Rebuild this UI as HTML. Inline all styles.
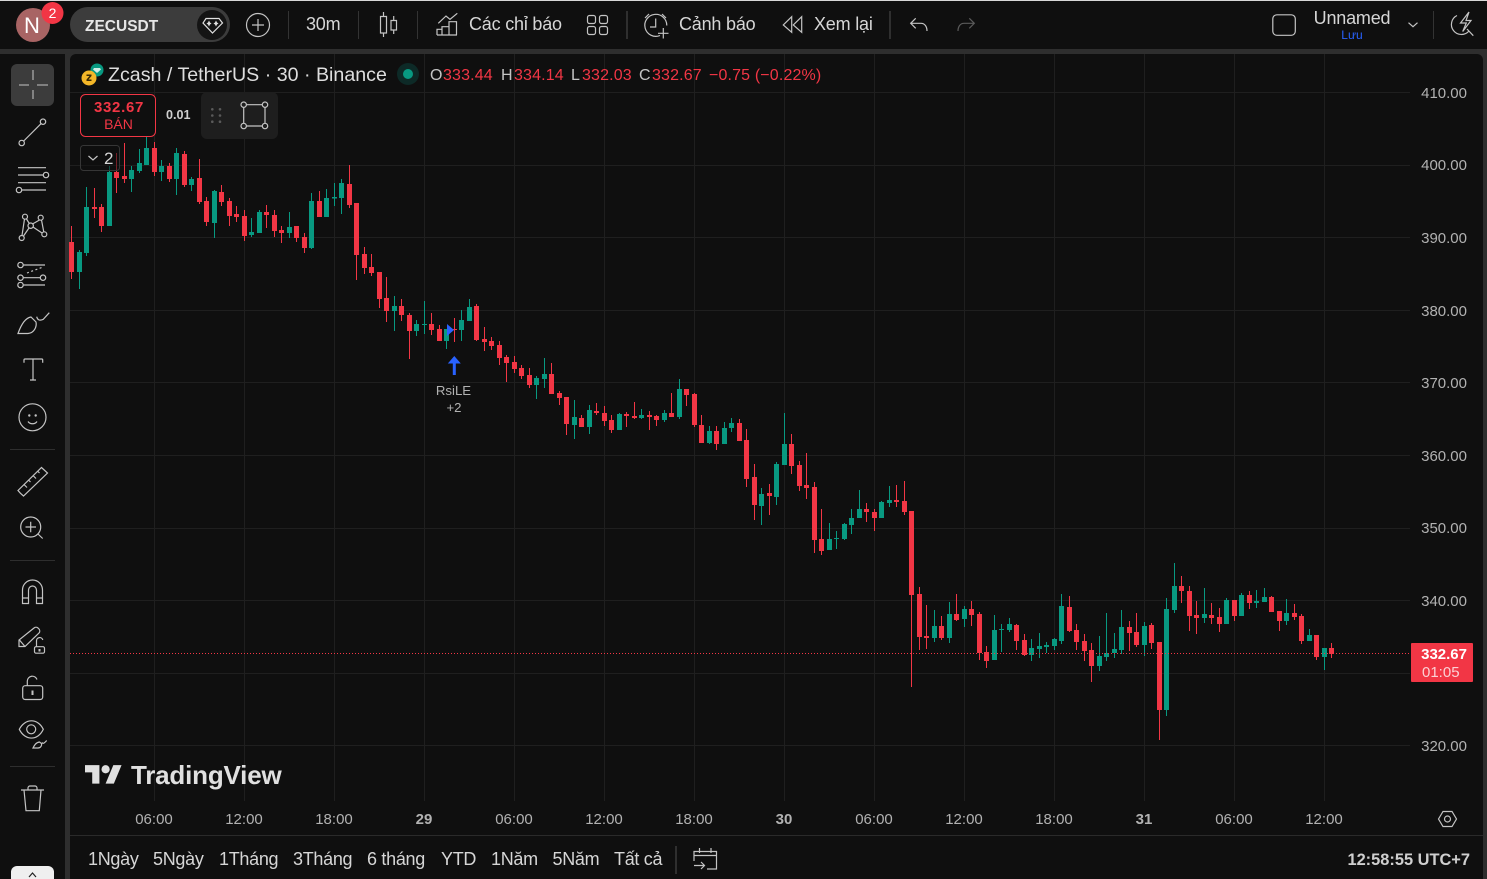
<!DOCTYPE html>
<html><head><meta charset="utf-8"><title>ZECUSDT</title>
<style>
html,body{margin:0;padding:0;background:#2e2e2e;width:1487px;height:879px;overflow:hidden}
svg{display:block;position:absolute;left:0;top:0}
text{font-family:"Liberation Sans","Noto Sans CJK JP",sans-serif;fill:#d6d6d6}
.t{font-size:18px;letter-spacing:-.2px}.b{font-size:18px;letter-spacing:-.3px}.p{font-size:15px;fill:#b2b2b2;text-anchor:end}
.x{font-size:15px;fill:#b2b2b2;text-anchor:middle}
.r{fill:#f23645}.o{font-size:16px;letter-spacing:.15px}
.i{fill:none;stroke:#c4c4c4;stroke-width:1.2}
</style></head><body>
<svg width="1487" height="879" viewBox="0 0 1487 879" xmlns="http://www.w3.org/2000/svg">
<rect width="1487" height="879" fill="#2e2e2e"/>
<rect width="1487" height="49" fill="#0f0f0f"/>
<rect width="1487" height="1" fill="#d8d8d8"/>
<path d="M0 54H65V879H0Z" fill="#0f0f0f"/>
<path d="M70 60a6 6 0 0 1 6-6H1477a6 6 0 0 1 6 6V879H70Z" fill="#0f0f0f"/>
<!-- grid -->
<path shape-rendering="crispEdges" stroke="#1f1f1f" stroke-width="1" fill="none" d="M70 92.5H1410M70 165.5H1410M70 237.5H1410M70 310.5H1410M70 382.5H1410M70 455.5H1410M70 528.5H1410M70 600.5H1410M70 673.5H1410M70 745.5H1410M154.5 54V801M244.5 54V801M334.5 54V801M424.5 54V801M514.5 54V801M604.5 54V801M694.5 54V801M784.5 54V801M874.5 54V801M964.5 54V801M1054.5 54V801M1144.5 54V801M1234.5 54V801M1324.5 54V801"/>
<path shape-rendering="crispEdges" stroke="#2a2a2a" d="M70 835.5H1483"/>
<!-- red wicks -->
<path shape-rendering="crispEdges" stroke="#f23645" stroke-width="1" fill="none" d="M71.5 226V279M94.5 188V218M101.5 204V232M116.5 153V193M124.5 143V183M154.5 142V176M169.5 163V182M184.5 151V187M199.5 159V204M206.5 197V226M221.5 185V206M229.5 198V226M236.5 206V222M244.5 210V241M266.5 205V228M274.5 210V237M281.5 226V243M296.5 226V242M304.5 233V253M319.5 191V217M349.5 165V208M356.5 203V280M364.5 247V274M371.5 254V276M379.5 272V308M386.5 277V322M401.5 299V321M409.5 313V359M431.5 313V335M439.5 325V341M454.5 318V342M476.5 304V341M484.5 327V351M491.5 337V350M499.5 341V365M506.5 355V382M514.5 356V373M521.5 365V379M529.5 368V388M551.5 363V394M559.5 391V405M566.5 397V435M581.5 415V427M596.5 403V415M604.5 406V426M611.5 415V433M626.5 412V427M634.5 402V419M649.5 411V430M656.5 415V426M671.5 393V417M686.5 389V406M694.5 393V427M701.5 415V443M716.5 426V450M739.5 419V441M746.5 429V487M754.5 464V520M769.5 484V515M791.5 434V474M799.5 461V491M806.5 453V499M814.5 482V553M821.5 509V555M866.5 503V522M874.5 509V531M896.5 485V507M904.5 481V515M911.5 511V687M919.5 587V650M926.5 605V649M941.5 616V640M956.5 594V621M971.5 601V626M979.5 612V660M986.5 646V668M1016.5 624V650M1024.5 634V656M1069.5 596V632M1076.5 624V650M1084.5 634V661M1091.5 643V682M1129.5 621V651M1136.5 613V647M1151.5 623V649M1159.5 642V740M1181.5 576V603M1189.5 586V631M1196.5 601V634M1211.5 603V624M1219.5 608V632M1234.5 600V621M1249.5 591V609M1271.5 596V612M1279.5 611V631M1294.5 604V620M1301.5 614V644M1316.5 635V660M1331.5 643V658"/>
<!-- red bodies -->
<path shape-rendering="crispEdges" stroke="#f23645" stroke-width="5" fill="none" d="M71.5 242V272M94.5 207V209M101.5 207V226M116.5 172V178M124.5 176V179M154.5 148V172M169.5 166V179M184.5 154V185M199.5 178V202M206.5 201V222M221.5 192V202M229.5 201V216M236.5 214V217M244.5 216V236M266.5 212V215M274.5 215V231M281.5 230V233M296.5 226V238M304.5 237V248M319.5 201V217M349.5 184V205M356.5 203V255M364.5 254V268M371.5 267V273M379.5 272V299M386.5 298V311M401.5 306V315M409.5 315V331M431.5 324V330M439.5 329V341M454.5 329V330M476.5 306V340M484.5 339V342M491.5 341V346M499.5 345V358M506.5 357V363M514.5 362V369M521.5 368V376M529.5 375V385M551.5 374V394M559.5 393V398M566.5 397V424M581.5 418V427M596.5 411V413M604.5 413V421M611.5 420V430M626.5 414V416M634.5 416V418M649.5 415V417M656.5 416V420M671.5 413V417M686.5 389V395M694.5 394V425M701.5 425V443M716.5 431V444M739.5 423V441M746.5 440V479M754.5 477V505M769.5 493V496M791.5 444V466M799.5 465V486M806.5 485V488M814.5 487V540M821.5 539V551M866.5 509V512M874.5 512V518M896.5 500V502M904.5 501V512M911.5 511V595M919.5 594V637M926.5 636V638M941.5 626V638M956.5 614V620M971.5 609V615M979.5 614V653M986.5 652V661M1016.5 625V641M1024.5 640V655M1069.5 607V631M1076.5 630V642M1084.5 641V651M1091.5 650V666M1129.5 627V633M1136.5 632V645M1151.5 625V643M1159.5 642V710M1181.5 586V591M1189.5 591V616M1196.5 615V618M1211.5 615V618M1219.5 617V624M1234.5 600V616M1249.5 595V603M1271.5 597V612M1279.5 611V621M1294.5 613V617M1301.5 616V641M1316.5 635V657M1331.5 648V654"/>
<!-- green wicks -->
<path shape-rendering="crispEdges" stroke="#089981" stroke-width="1" fill="none" d="M79.5 250V289M86.5 187V256M109.5 166V226M131.5 166V192M139.5 149V173M146.5 137V165M161.5 160V181M176.5 148V195M191.5 177V191M214.5 190V238M251.5 218V237M259.5 210V233M289.5 212V238M311.5 193V249M326.5 189V217M334.5 183V206M341.5 179V214M394.5 296V331M416.5 320V336M424.5 301V334M446.5 329V349M461.5 310V341M469.5 299V321M536.5 376V399M544.5 358V388M574.5 400V439M589.5 405V434M619.5 413V430M641.5 409V419M664.5 410V422M679.5 379V419M709.5 426V444M724.5 422V444M731.5 418V432M761.5 488V525M776.5 462V505M784.5 413V465M829.5 523V550M836.5 531V549M844.5 523V540M851.5 509V534M859.5 490V518M881.5 501V518M889.5 486V507M934.5 610V642M949.5 602V643M964.5 606V627M994.5 615V660M1001.5 624V652M1009.5 618V632M1031.5 639V661M1039.5 633V658M1046.5 642V653M1054.5 638V650M1061.5 594V644M1099.5 636V671M1106.5 613V661M1114.5 633V658M1121.5 610V654M1144.5 622V656M1166.5 598V716M1174.5 563V613M1204.5 588V623M1226.5 598V624M1241.5 593V616M1256.5 590V608M1264.5 588V602M1286.5 599V625M1309.5 629V641M1324.5 648V670"/>
<!-- green bodies -->
<path shape-rendering="crispEdges" stroke="#089981" stroke-width="5" fill="none" d="M79.5 252V272M86.5 207V253M109.5 172V226M131.5 170V179M139.5 163V171M146.5 148V165M161.5 166V172M176.5 153V179M191.5 179V185M214.5 191V223M251.5 232V235M259.5 212V233M289.5 227V233M311.5 201V248M326.5 198V217M334.5 197V198.500M341.5 183V198M394.5 306V311M416.5 324V331M424.5 324V325M446.5 329V341M461.5 320V330M469.5 307V321M536.5 378V385M544.5 374V379M574.5 417V425M589.5 410V427M619.5 414V430M641.5 415V418M664.5 413V420M679.5 389V417M709.5 431V443M724.5 428V444M731.5 423V428M761.5 494V506M776.5 464V497M784.5 444V465M829.5 539V550M836.5 538V539M844.5 524V539M851.5 518V525M859.5 509V518M881.5 502V518M889.5 500V503M934.5 626V638M949.5 614V638M964.5 609V619M994.5 630V660M1001.5 629V630M1009.5 624V630M1031.5 648V655M1039.5 646V649M1046.5 645V647M1054.5 639V646M1061.5 606V641M1099.5 656V666M1106.5 653V657M1114.5 649V653M1121.5 627V650M1144.5 626V645M1166.5 609V710M1174.5 586V610M1204.5 614V618M1226.5 600V624M1241.5 595V616M1256.5 601V603M1264.5 597V602M1286.5 613V621M1309.5 635V641M1324.5 648V657"/>
<!-- last price dotted -->
<path stroke="#f23645" stroke-width="1" stroke-dasharray="1 2" d="M70 653.500H1410"/>
<rect x="1411" y="643" width="62" height="39" rx="1" fill="#f23645"/>
<text x="1467" y="659" font-size="15" font-weight="bold" text-anchor="end" style="fill:#fff">332.67</text>
<text x="1422" y="677" font-size="15" style="fill:#fbd0d4">01:05</text>

<!-- price axis -->
<text class="p" x="1467" y="98">410.00</text><text class="p" x="1467" y="170">400.00</text><text class="p" x="1467" y="243">390.00</text><text class="p" x="1467" y="316">380.00</text><text class="p" x="1467" y="388">370.00</text><text class="p" x="1467" y="461">360.00</text><text class="p" x="1467" y="533">350.00</text><text class="p" x="1467" y="606">340.00</text><text class="p" x="1467" y="751">320.00</text>
<!-- time axis -->
<text class="x" x="154" y="824">06:00</text><text class="x" x="244" y="824">12:00</text><text class="x" x="334" y="824">18:00</text><text class="x" x="424" y="824" font-weight="bold">29</text><text class="x" x="514" y="824">06:00</text><text class="x" x="604" y="824">12:00</text><text class="x" x="694" y="824">18:00</text><text class="x" x="784" y="824" font-weight="bold">30</text><text class="x" x="874" y="824">06:00</text><text class="x" x="964" y="824">12:00</text><text class="x" x="1054" y="824">18:00</text><text class="x" x="1144" y="824" font-weight="bold">31</text><text class="x" x="1234" y="824">06:00</text><text class="x" x="1324" y="824">12:00</text>
<polygon points="1438.5,819 1443,811.500 1452,811.500 1456.500,819 1452,826.500 1443,826.500" class="i"/><circle cx="1447.500" cy="819" r="3" class="i"/>

<!-- bottom bar -->
<text class="b" x="88" y="865">1Ngày</text><text class="b" x="153" y="865">5Ngày</text><text class="b" x="219" y="865">1Tháng</text><text class="b" x="293" y="865">3Tháng</text><text class="b" x="367" y="865">6 tháng</text><text class="b" x="441" y="865">YTD</text><text class="b" x="491" y="865">1Năm</text><text class="b" x="552.500" y="865">5Năm</text><text class="b" x="614" y="865">Tất cả</text>
<path stroke="#3a3a3a" stroke-width="1.500" d="M676 846V874"/>
<path class="i" d="M694 861V851.500H716.500V869H707M694 855.500H716.500M699.500 848V853M711 848V853M694 865.500H704M701 862l3.500 3.500-3.500 3.500"/>
<text x="1470" y="865" font-size="16.400" font-weight="bold" text-anchor="end" style="fill:#cfcfcf">12:58:55 UTC+7</text>

<!-- legend -->
<circle cx="97" cy="70" r="6.500" fill="#089981"/><path d="M94 68h6l1 1.500-4 3.500-4-3.500z" fill="#cfeee6"/>
<circle cx="89" cy="78" r="7.500" fill="#f4b728"/><path d="M86.500 74.500h5v1.500l-3 3.500h3v1.500h-5v-1.500l3-3.500h-3z" fill="#3a2a05"/>
<text x="108" y="81" font-size="19.640" style="fill:#dedede">Zcash / TetherUS · 30 · Binance</text>
<circle cx="408" cy="74" r="11" fill="#0d2a27"/><circle cx="408" cy="74" r="5" fill="#089981"/>
<text class="o" x="430" y="80" style="fill:#c4c4c4">O</text><text class="o r" x="443" y="80">333.44</text>
<text class="o" x="501" y="80" style="fill:#c4c4c4">H</text><text class="o r" x="514" y="80">334.14</text>
<text class="o" x="571" y="80" style="fill:#c4c4c4">L</text><text class="o r" x="582" y="80">332.03</text>
<text class="o" x="639" y="80" style="fill:#c4c4c4">C</text><text class="o r" x="652" y="80">332.67</text>
<text class="o r" x="709" y="80">−0.75 (−0.22%)</text>

<!-- trading widgets -->
<rect x="80.500" y="94.500" width="75" height="42" rx="5" fill="#0f0f0f" stroke="#f23645"/>
<text x="119" y="112" font-size="15" font-weight="bold" text-anchor="middle" letter-spacing=".7" class="r">332.67</text>
<text x="118.500" y="129" font-size="14" text-anchor="middle" class="r">BÁN</text>
<text x="166" y="119" font-size="12.600" font-weight="bold" style="fill:#cfcfcf">0.01</text>
<rect x="201" y="92" width="77" height="47" rx="6" fill="#1e1e1e"/>
<g fill="#5a5a5a"><circle cx="212.300" cy="109.300" r="1.300"/><circle cx="220" cy="109.300" r="1.300"/><circle cx="212.300" cy="115.500" r="1.300"/><circle cx="220" cy="115.500" r="1.300"/><circle cx="212.300" cy="121.700" r="1.300"/><circle cx="220" cy="121.700" r="1.300"/></g>
<path class="i" d="M246.500 104.700H262.300M246.500 126H262.300M243.700 107.500V123.200M265 107.500V123.200"/>
<g class="i"><circle cx="243.700" cy="104.700" r="2.700"/><circle cx="265" cy="104.700" r="2.700"/><circle cx="243.700" cy="126" r="2.700"/><circle cx="265" cy="126" r="2.700"/></g>
<rect x="80.500" y="145.500" width="39" height="25" rx="3" fill="#0f0f0f" fill-opacity=".55" stroke="#363636"/>
<path class="i" d="M88.500 156l4.500 4 4.500-4"/>
<text x="104" y="164" font-size="17" style="fill:#d6d6d6">2</text>

<!-- RsiLE marker -->
<polygon points="447,324 454,330 447,336" fill="#2962ff"/>
<path d="M454.300 356l6.500 7.500h-5V375h-3V363.500h-5z" fill="#2962ff"/>
<text x="453.500" y="395" font-size="13.200" text-anchor="middle" style="fill:#b2b2b2">RsiLE</text>
<text x="454" y="412" font-size="13.200" text-anchor="middle" style="fill:#b2b2b2">+2</text>

<!-- TV logo -->
<g transform="translate(85,761) scale(1.030)" fill="#e0e0e0"><path d="M14 22H7V11H0V4h14v18zM28 22h-8l7.500-18h8L28 22z"/><circle cx="20" cy="8" r="4"/></g>
<text x="131" y="784" font-size="26" font-weight="bold" letter-spacing="-.2" style="fill:#e0e0e0">TradingView</text>

<!-- top bar -->
<circle cx="33" cy="25" r="17" fill="#a86464"/>
<text x="32" y="33" font-size="22" text-anchor="middle" style="fill:#fff">N</text>
<circle cx="52.500" cy="13" r="11" fill="#f23645"/>
<text x="52.500" y="18" font-size="14" text-anchor="middle" style="fill:#fff">2</text>
<rect x="70" y="7" width="160" height="35" rx="17.500" fill="#3c3c3c"/>
<circle cx="212" cy="25" r="15" fill="#141414"/>
<text x="85" y="31" font-size="15.500" font-weight="bold" style="fill:#e6e6e6">ZECUSDT</text>
<path class="i" style="stroke:#e0e0e0" d="M206 18.500H219L222.500 23L212.500 33L203 23Z"/>
<path d="M209 20.500l1 2 1.500 1-1.500 1-1 2-1-2-1.500-1 1.500-1zM216 20.500l1 2 1.500 1-1.500 1-1 2-1-2-1.500-1 1.500-1z" fill="#e0e0e0"/>
<circle cx="258" cy="25" r="11.500" class="i"/><path class="i" d="M252 25H264M258 19V31"/>
<path stroke="#333" stroke-width="1" d="M288.500 11V39M358.500 11V39M417.500 11V39M1433.500 11V39"/>
<path stroke="#3a3a3a" stroke-width="1.500" d="M627 11V39M890 11V39"/>
<text class="t" x="306" y="30">30m</text>
<path class="i" d="M380.500 16.500H386.500V33H380.500ZM383.500 12V16.500M383.500 33V37M391 20.500H396.500V30H391ZM393.700 16V20.500M393.700 30V34"/>
<path class="i" d="M437 35H457M437 35V29.300H442V35M442 35V26.700H449V35M449 35V21.700H456.500V35M438.300 23.300L446 16L450 19.300L457.300 13.300"/>
<text class="t" x="469" y="30">Các chỉ báo</text>
<g class="i"><rect x="587.500" y="15.500" width="8" height="8" rx="2"/><rect x="599.500" y="15.500" width="8" height="8" rx="2"/><rect x="587.500" y="26.500" width="8" height="8" rx="2"/><rect x="599.500" y="26.500" width="8" height="8" rx="2"/></g>
<path class="i" d="M660 35.500A11 11 0 1 1 666.800 25.500M655.700 18.500V27H650M645 18l4-4M666 18l-4-4M663.300 28V38.500M658 33.300H668.500"/>
<text class="t" x="679" y="30">Cảnh báo</text>
<path class="i" d="M791.700 16.700L783.300 25L791.700 32.300ZM801.700 16.700L793.300 25L801.700 32.300Z"/>
<text class="t" x="814" y="30">Xem lại</text>
<path class="i" d="M915.700 18.300L910.700 23.300L915.700 28.300M910.700 23.300H921C925 23.300 927 27 927 31"/>
<path class="i" style="stroke:#5a5a5a" d="M969.300 18.300L974.300 23.300L969.300 28.300M974.300 23.300H964C960 23.300 958 27 958 31"/>
<rect x="1272.800" y="14.800" width="22.500" height="20.500" rx="4" class="i"/>
<text x="1352" y="24" font-size="18" letter-spacing="-.2" text-anchor="middle" style="fill:#d6d6d6">Unnamed</text>
<text x="1352" y="39" font-size="12" text-anchor="middle" style="fill:#2962ff">Lưu</text>
<path class="i" d="M1408.500 22.700L1413 26.700L1417.500 22.700"/>
<path class="i" d="M1457 15.500A10 10 0 1 0 1469 31M1469 12L1460.500 23H1466.300L1462.700 31.500L1471 20.500H1466ZM1467 29L1473.300 35.700"/>

<!-- left toolbar -->
<rect x="11" y="64" width="43" height="42" rx="6" fill="#3c3c3c"/>
<path stroke="#a8a8a8" stroke-width="1.300" d="M19 85H29M37 85H48M33 70V80M33 90V99"/>
<g class="i">
<path d="M23.700 141L41 123.700"/><circle cx="43" cy="121.700" r="2.700"/><circle cx="21.700" cy="143" r="2.700"/>
<path d="M18 167.700H46M18 175H43.300M18 182.700H46M22 190H46"/><circle cx="46" cy="175" r="2.700"/><circle cx="19" cy="190" r="2.700"/>
<circle cx="25" cy="216.700" r="2.500"/><circle cx="40.700" cy="217.700" r="2.500"/><circle cx="30.700" cy="225.700" r="2.700"/><circle cx="44.300" cy="234.300" r="2.500"/><circle cx="21.700" cy="238" r="2.500"/>
<path d="M24.500 219L22 235.500M26.500 219L29.300 223.500M39.500 220L32.500 224M41.500 220L43.800 232M33 227L42 233M29 228L23.500 236"/>
<circle cx="20.500" cy="265" r="2.700"/><circle cx="20.500" cy="277.700" r="2.700"/><circle cx="43" cy="277.700" r="2.700"/><circle cx="20.500" cy="285" r="2.700"/>
<path d="M23.200 265H45M23.200 277.700H40.300M23.200 285H45"/><path stroke-dasharray="2 2.500" d="M27 273L43 267"/>
<path d="M18 333.500H28C34 333 37 327 36 322L31 317C25 318 21 325 18 333.500ZM36.700 316.700C37.500 320 39.500 321 43.300 319.300L49.300 312.700"/>
<path d="M24 362.700V360C24 359.300 24.500 359 25 359H41.700C42.300 359 42.700 359.300 42.700 360V362.700M33 359V380M30 380H36"/>
<circle cx="32.500" cy="417.300" r="13.500"/><path d="M28 421.500C30 424.500 35 424.500 37 421.500"/>
<path d="M20.500 493.300L18 490.500L41.500 467.500L47.500 473L23.500 496ZM24 484.500L27 487.500M28.500 480L30.500 482M33 475.500L36 478.500M37.500 471L39.500 473"/>
<circle cx="30.700" cy="527" r="10"/><path d="M38 534L42.700 538.500M25.500 527H36M30.700 521.700V532.300"/>
<path d="M22.500 603.500V590a10 10 0 0 1 20 0V603.500H36.500V590a4 4 0 0 0-8 0V603.500ZM22.500 598H28.500M36.500 598H42.500"/>
<path d="M19 646.500V640L34 628a3 3 0 0 1 4 0l1 1a3 3 0 0 1 0 4L25 646.500ZM19 639.500L25 646.500"/>
<rect x="34.500" y="646.700" width="10" height="6.500" rx="1.500"/><path d="M36.500 646.700V641a3.200 3.200 0 0 1 6.300-1"/>
<rect x="22.700" y="685.700" width="20" height="13.800" rx="2.500"/><path d="M27.300 685.700V681a5 5 0 0 1 9.700-1.500"/>
<path d="M19.300 729.300C25 718 38 718 43.300 729.300C38 741 25 741 19.300 729.300Z"/><circle cx="31.200" cy="729.300" r="4.500"/>
<path d="M33 748H38C41 748 42 745 41.500 743.500L39.500 742C36 742.500 34.500 745 33 748ZM42 742.500C43 744 44 743.500 46.700 740.500"/>
<path d="M21 790H44M28 790V788C28 786.800 29 786 30 786H35C36 786 37 786.800 37 788V790M24 790L26 810.700H39.300L41 790"/>
</g>
<g fill="#c4c4c4"><circle cx="29.300" cy="415.500" r="1.200"/><circle cx="35.700" cy="415.500" r="1.200"/><rect x="31.500" y="690.500" width="2" height="4.500"/><rect x="38.500" y="649" width="2" height="2.500"/></g>
<path stroke="#2e2e2e" stroke-width="1" d="M10 449.500H55M10 560.500H55M10 766.500H55"/>
<path d="M11 879V872a6 6 0 0 1 6-6H48a6 6 0 0 1 6 6V879Z" fill="#efefef"/>
<path d="M29 877l3.500-4 3.500 4" fill="none" stroke="#222" stroke-width="1.200"/>
</svg>
</body></html>
